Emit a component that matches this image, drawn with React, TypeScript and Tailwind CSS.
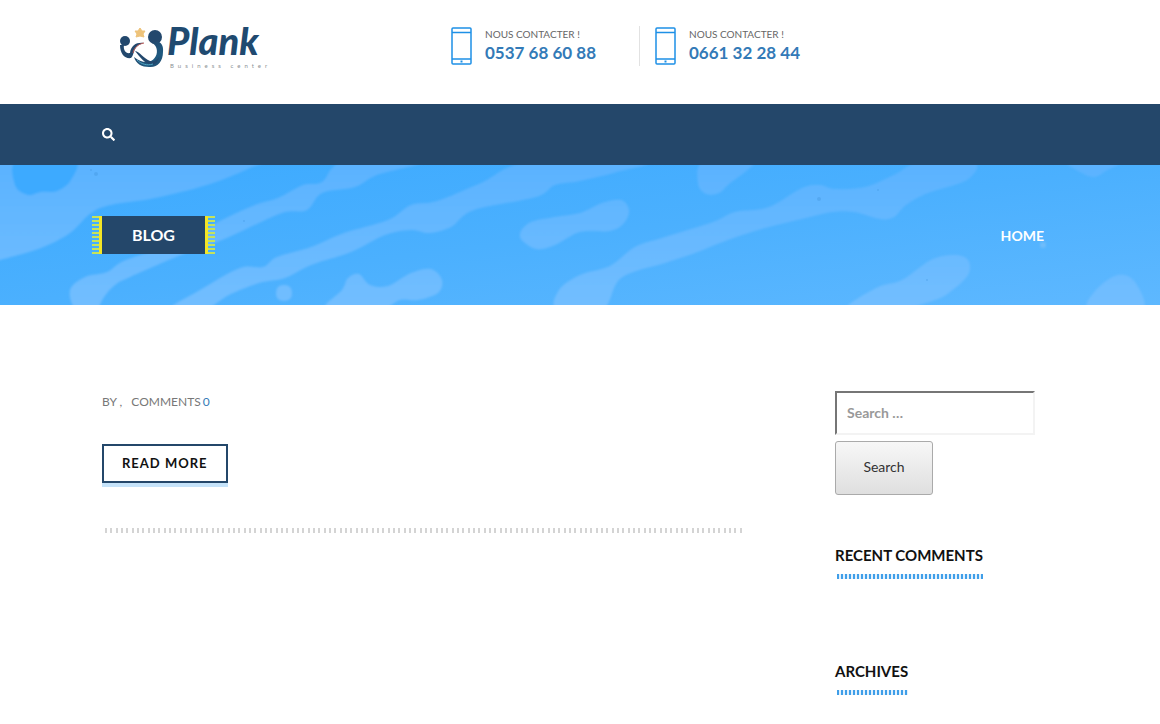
import { FaSearch } from "react-icons/fa";

type Point = [number, number];

const phones = [
  { label: "NOUS CONTACTER !", number: "0537 68 60 88" },
  { label: "NOUS CONTACTER !", number: "0661 32 28 44" },
];

const widgets = ["RECENT COMMENTS", "ARCHIVES"];

const streaks: Point[][] = [
  [[-20, -20], [290, -20], [250, 3], [207, 20], [155, 33], [111, 40], [91, 48], [70, 68], [41, 83], [0, 95], [-20, 100]],
  [[70, 125], [76, 145], [95, 146], [104, 132], [115, 120], [130, 112], [181, 90], [222, 75], [259, 58], [285, 47], [307, 45], [322, 28], [355, 22], [377, 10], [425, -4], [345, -4], [322, 17], [303, 20], [278, 33], [255, 40], [222, 55], [180, 77], [126, 95], [107, 107], [85, 112]],
  [[170, 144], [200, 125], [240, 103], [263, 102], [277, 92], [311, 82], [344, 68], [388, 55], [411, 40], [437, 36], [481, 18], [529, -3], [645, -3], [617, 7], [580, 16], [555, 20], [536, 32], [474, 45], [451, 62], [429, 68], [411, 65], [385, 70], [351, 87], [311, 100], [285, 113], [259, 118], [229, 130], [205, 144]],
  [[276, 128], [278, 122], [284, 120], [290, 122], [292, 128], [290, 134], [284, 136], [278, 134]],
  [[326, 144], [342, 125], [348, 113], [359, 109], [370, 120], [388, 121], [411, 108], [431, 104], [442, 115], [438, 128], [418, 135], [400, 135], [380, 144]],
  [[520, 72], [529, 58], [555, 52], [580, 48], [602, 38], [621, 35], [629, 45], [624, 58], [610, 66], [580, 67], [555, 80], [536, 84]],
  [[557, 145], [559, 125], [580, 110], [610, 101], [635, 82], [665, 72], [713, 57], [735, 47], [769, 42], [802, 23], [820, 20], [835, 24], [865, 22], [894, 10], [920, -3], [974, -3], [967, 15], [928, 28], [906, 40], [894, 52], [880, 54], [854, 47], [832, 47], [802, 54], [765, 63], [728, 75], [695, 88], [665, 98], [621, 113], [602, 145]],
  [[704, -4], [698, 18], [706, 29], [719, 28], [728, 20], [754, -4]],
  [[846, 145], [876, 123], [902, 115], [931, 95], [954, 90], [968, 95], [968, 110], [950, 127], [935, 135], [900, 144]],
  [[1089, 145], [1096, 125], [1118, 110], [1135, 117], [1142, 145]],
  [[1068, -4], [1080, 7], [1094, 12], [1106, 6], [1120, -4]],
];

const pool: Point[] = [[18, -6], [15, 20], [28, 30], [41, 27], [57, 26], [71, 15], [74, -6]];

// closed Catmull-Rom curve through the points
function smoothPath(points: Point[]) {
  const n = points.length;
  let d = `M${points[0][0]} ${points[0][1]}`;

  for (let i = 0; i < n; i++) {
    const p0 = points[(i - 1 + n) % n];
    const p1 = points[i];
    const p2 = points[(i + 1) % n];
    const p3 = points[(i + 2) % n];

    d += `C${p1[0] + (p2[0] - p0[0]) / 6} ${p1[1] + (p2[1] - p0[1]) / 6} ${p2[0] - (p3[0] - p1[0]) / 6} ${p2[1] - (p3[1] - p1[1]) / 6} ${p2[0]} ${p2[1]}`;
  }

  return d + "Z";
}

function HeroBackground() {
  return (
    <svg
      className="absolute inset-0 h-full w-full"
      viewBox="0 0 1160 140"
      preserveAspectRatio="none"
      aria-hidden="true"
    >
      <defs>
        <linearGradient id="water" x1="0" y1="0" x2="1" y2="1">
          <stop offset="0" stopColor="#3caaff" />
          <stop offset="0.5" stopColor="#4bb0fe" />
          <stop offset="1" stopColor="#5eb8ff" />
        </linearGradient>
        <linearGradient id="streak" x1="0" y1="0" x2="0" y2="140" gradientUnits="userSpaceOnUse">
          <stop offset="0" stopColor="#5bb3ff" />
          <stop offset="1" stopColor="#72beff" />
        </linearGradient>
        <filter id="soft" x="-5%" y="-20%" width="110%" height="140%">
          <feGaussianBlur stdDeviation="1" />
        </filter>
      </defs>
      <rect width="1160" height="140" fill="url(#water)" />
      <g filter="url(#soft)">
        {streaks.map((points, i) => (
          <path key={i} d={smoothPath(points)} fill="url(#streak)" />
        ))}
        <path d={smoothPath(pool)} fill="#3caaff" />
        <circle cx="1043" cy="80" r="3" fill="#70bdfb" />
      </g>
      <g fill="#3f93dc" opacity="0.35">
        <circle cx="96" cy="9" r="2" />
        <circle cx="91" cy="5" r="1" />
        <circle cx="244" cy="56" r="1" />
        <circle cx="819" cy="34" r="2" />
        <circle cx="878" cy="25" r="1" />
        <circle cx="927" cy="115" r="1" />
      </g>
    </svg>
  );
}

function Logo() {
  return (
    <a href="#" aria-label="Plank Business center" className="block">
      <svg width="152" height="44" viewBox="0 0 152 44" className="overflow-visible">
        <defs>
          <linearGradient id="body" x1="0" y1="0" x2="1" y2="1">
            <stop offset="0.3" stopColor="#23486d" />
            <stop offset="0.7" stopColor="#1f5a80" />
            <stop offset="1" stopColor="#23486d" />
          </linearGradient>
        </defs>
        <circle cx="5" cy="15" r="5" fill="#23486d" />
        <circle cx="35" cy="11" r="7" fill="#23486d" />
        <path d="M0 19C0 28 5 33 11 32C13 30 13 28 14 26C15 21 19 18 24 17C17 16 11 19 10 27C6 28 3 24 4 19Z" fill="#23486d" />
        <path
          d="M32 17C39 13 44 18 43 26C43 36 37 42 29 41C22 41 16 38 14 31C20 36 26 37 31 35C37 32 38 25 36 21C35 19 34 18 32 17Z"
          fill="url(#body)"
        />
        <path d="M15 25C20 26 23 32 30 35C34 36 37 34 39 31C38 36 35 39 31 39C24 37 20 31 15 25Z" fill="#23486d" />
        <path d="M17 34C21 38 27 40 33 38" fill="none" stroke="#4fa5c4" strokeWidth="1" />
        <path d="M13 27C14 22 18 18 24 17" fill="none" stroke="#c35e58" strokeWidth="1" />
        <path d="M20 2L22 5L25 5L23 8L24 11L20 10L16 11L17 8L15 5L18 5Z" fill="#eec37a" stroke="#eec37a" strokeLinejoin="round" />
        <text x="47" y="29" className="fill-[#1f4a70] font-['Lato'] text-[38px] font-black italic">
          Plank
        </text>
        <text x="50" y="42" className="fill-[#8b8f94] font-['Lato'] text-[6px] tracking-[4px]">
          Business center
        </text>
      </svg>
    </a>
  );
}

function PhoneIcon() {
  return (
    <svg width="21" height="38" viewBox="0 0 21 38" fill="none" stroke="#1e90e6" strokeWidth="1.5" aria-hidden="true">
      <rect x="1" y="1" width="19" height="36" rx="1" />
      <path d="M1 5.5H20M1 32H20" />
      <path d="M9.500 34.500H11.500" strokeWidth="2" />
    </svg>
  );
}

function Header() {
  return (
    <header>
      <div className="mx-auto flex w-full max-w-[956px] items-start pt-[26px] pb-[34px]">
        <div className="w-[349px] pl-[18px]">
          <Logo />
        </div>
        {phones.map((phone, i) => (
          <div
            key={phone.number}
            className={`flex h-10 items-center gap-[13px] ${
              i === 0 ? "w-[188px]" : "border-l border-[#e2e2e2] pl-[15px]"
            }`}
          >
            <PhoneIcon />
            <div className="pb-[2px]">
              <p className="text-[10px] leading-4 text-[#666]">{phone.label}</p>
              <p className="text-[17px] leading-[22px] font-bold whitespace-nowrap text-[#337ab7]">
                {phone.number}
              </p>
            </div>
          </div>
        ))}
      </div>
      <nav className="bg-[#24476a]">
        <div className="mx-auto flex h-[61px] w-full max-w-[956px] items-center">
          <button type="button" aria-label="Open search" className="text-white">
            <FaSearch size={13} />
          </button>
        </div>
      </nav>
    </header>
  );
}

function Fringe({ side }: { side: "left" | "right" }) {
  return (
    <span
      className={`w-[10px] self-stretch border-[#f4e526] bg-[repeating-linear-gradient(to_bottom,#c5e35c_0px,#c5e35c_2px,transparent_2px,transparent_4px)] ${
        side === "left" ? "-ml-[10px] border-r-3" : "border-l-3"
      }`}
    />
  );
}

function Hero() {
  return (
    <section className="relative">
      <HeroBackground />
      <div className="relative mx-auto flex h-[140px] w-full max-w-[956px] items-center justify-between">
        <div className="flex h-[38px]">
          <Fringe side="left" />
          <h1 className="bg-[#24476a] px-[30px] text-[16px] leading-[38px] font-bold text-white">BLOG</h1>
          <Fringe side="right" />
        </div>
        <a href="#" className="pr-[14px] text-[14px] font-bold text-white">
          HOME
        </a>
      </div>
    </section>
  );
}

function Post() {
  return (
    <article className="w-[640px] pt-[3px]">
      <p className="text-[12px] leading-4 text-[#777]">
        BY ,<span className="ml-[9px]">COMMENTS</span>{" "}
        <a href="#" className="-ml-px text-[#337ab7]">
          0
        </a>
      </p>
      <a
        href="#"
        className="mt-[34px] inline-block border-2 border-[#24476a] px-[18px] text-[13px] leading-[35px] font-bold tracking-[1px] text-[#111] shadow-[0_4px_0_#c5e3fa]"
      >
        READ MORE
      </a>
      <div className="mt-[45px] ml-[3px] h-[5px] bg-[linear-gradient(to_right,#d4d4d4_0px,#d4d4d4_2px,transparent_2px,transparent_5px,#d4d4d4_5px,#d4d4d4_7px,transparent_7px,transparent_11px,#d4d4d4_11px,#d4d4d4_13px,transparent_13px)] bg-[length:16px_5px]" />
    </article>
  );
}

function Sidebar() {
  return (
    <aside className="w-[223px]">
      <form onSubmit={(e) => e.preventDefault()}>
        <input
          type="search"
          aria-label="Search"
          placeholder="Search …"
          className="block h-11 w-[200px] border-2 border-t-[#767676] border-r-[#f3f3f3] border-b-[#f3f3f3] border-l-[#767676] px-[10px] pb-[2px] text-[14px] font-bold outline-none placeholder:text-[#999]"
        />
        <button
          type="submit"
          className="mt-[6px] w-[98px] rounded-[3px] border border-[#aaa] bg-linear-to-b from-[#f7f7f7] to-[#dfdfdf] pb-[2px] text-[14px] leading-[50px] text-[#333]"
        >
          Search
        </button>
      </form>
      <div className="mt-[50px] flex flex-col items-start gap-[82px]">
        {widgets.map((title) => (
          <section key={title}>
            <h2 className="text-[15px] leading-5 font-bold text-[#111]">{title}</h2>
            <div className="mt-[9px] ml-[2px] h-[5px] bg-[repeating-linear-gradient(to_right,#3f9ee8_0px,#3f9ee8_2px,#e3f1fd_2px,#e3f1fd_4px)]" />
          </section>
        ))}
      </div>
    </aside>
  );
}

export default function App() {
  return (
    <div className="min-h-screen overflow-x-hidden bg-white font-['Lato',sans-serif]">
      <Header />
      <Hero />
      <main className="mx-auto flex w-full max-w-[956px] items-start justify-between pt-[86px]">
        <Post />
        <Sidebar />
      </main>
    </div>
  );
}
